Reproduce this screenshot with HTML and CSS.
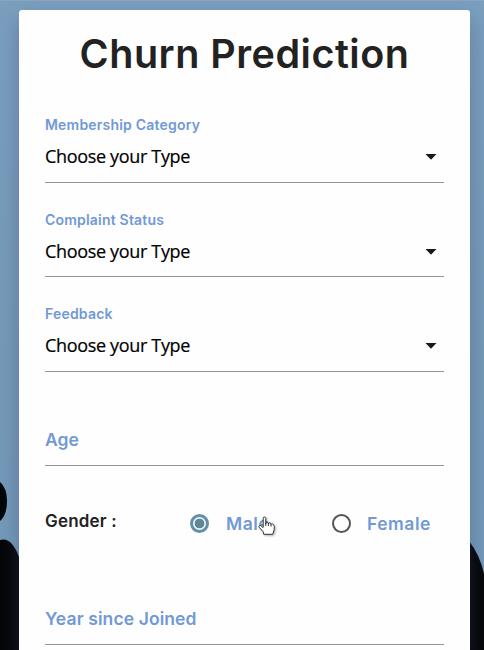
FILE: index.html
```html
<!DOCTYPE html>
<html lang="en">
<head>
<meta charset="utf-8">
<title>Churn Prediction</title>
<link rel="stylesheet" href="styles.css">
</head>
<body>
<svg class="scene" viewBox="0 0 484 650" aria-hidden="true">
  <path d="M0 482Q7 488 7 501Q7 515 0 521Z"/>
  <path d="M0 540Q7 538 12 544Q17 550 20 560V650H0Z"/>
  <path d="M469 541Q480 555 484 574V650H469Z"/>
</svg>
<form class="card">
  <h1 class="title">Churn Prediction</h1>
  <div class="field">
    <span class="label">Membership Category</span>
    <div class="select"><span class="value">Choose your Type</span><svg class="arrow" viewBox="0 0 12 6"><path d="M.5 0h11L6 5.8z"/></svg></div>
  </div>
  <div class="field">
    <span class="label">Complaint Status</span>
    <div class="select"><span class="value">Choose your Type</span><svg class="arrow" viewBox="0 0 12 6"><path d="M.5 0h11L6 5.8z"/></svg></div>
  </div>
  <div class="field">
    <span class="label">Feedback</span>
    <div class="select"><span class="value">Choose your Type</span><svg class="arrow" viewBox="0 0 12 6"><path d="M.5 0h11L6 5.8z"/></svg></div>
  </div>
  <div class="field input"><span class="placeholder">Age</span></div>
  <div class="gender">
    <span class="question">Gender :</span>
    <span class="option"><span class="radio checked"></span><span class="choice">Male<svg class="pointer" viewBox="0 0 18 20"><path d="M5.2 11V2.3Q5.2 1 6.5 1T7.8 2.3V8Q7.8 6 9.1 6T10.4 8Q10.5 6.7 11.7 6.7T13 8.6Q13.2 7.7 14.4 7.9T16.4 10.6Q16.7 13 14.8 18.3H5.8L5 15.5 1.5 11.7Q.3 10.2 1.5 9.6T4 10.5L5.2 12"/><path d="M7.8 8v2M10.4 8v2M13 8.6v2"/></svg></span></span>
    <span class="option"><span class="radio"></span><span class="choice">Female</span></span>
  </div>
  <div class="field input last"><span class="placeholder">Year since Joined</span></div>
</form>
</body>
</html>
```
FILE: styles.css
```css
* { box-sizing: border-box; }
html, body { margin: 0; height: 100%; overflow: hidden; }
body {
  display: flex;
  background: linear-gradient(#7a9fbe, #7499b7 60%, #7399b9);
  border-top: 1px solid #8aa4bd;
  font-family: Inter, "Liberation Sans", sans-serif;
  font-weight: 600;
  color: #222;
}
.scene { position: absolute; inset: 0; width: 484px; height: 650px; fill: #050608; }
.card {
  position: relative;
  width: 451px;
  margin: 9px 0 0 19px;
  padding: 19px 26px 0;
  background: #fefefe;
  border-radius: 3px 3px 0 0;
  box-shadow: 0 10px 20px rgba(60, 65, 110, .38);
}
.title {
  margin: 0;
  height: 59px;
  font-size: 39.5px;
  line-height: 51px;
  font-weight: 600;
  letter-spacing: .5px;
  text-align: center;
  white-space: nowrap;
}
.field { height: 94.5px; border-bottom: 1px solid #949494; white-space: nowrap; }
.label { display: block; padding-top: 29px; height: 50px; line-height: 16px; font-size: 14px; letter-spacing: .2px; color: #7199d6; }
.select { display: flex; justify-content: space-between; align-items: center; height: 38px; padding-right: 7.5px; }
.value { margin-top: -2px; font: 400 18px/24px "Open Sans", sans-serif; color: #000; letter-spacing: -.33px; -webkit-text-stroke: .2px #000; }
.arrow { width: 12px; height: 6px; fill: #191919; }
.input { display: flex; align-items: flex-end; padding-bottom: 13px; }
.placeholder { font-size: 17.5px; line-height: 24px; letter-spacing: .1px; color: #7199d6; }
.gender { display: grid; grid-template-columns: 145px 142px 1fr; align-items: center; height: 115px; white-space: nowrap; }
.question { font-size: 17px; line-height: 24px; letter-spacing: .2px; margin-top: -5px; }
.option { display: flex; align-items: center; gap: 17px; }
.option:last-child { gap: 16px; }
.radio { width: 19px; height: 19px; border: 2px solid #555; border-radius: 50%; flex: none; }
.radio.checked { border: 3px solid #6490a6; background: radial-gradient(circle, #5d8795 0 4.5px, #eefaff 5.2px); }
.choice { position: relative; font-size: 17.5px; line-height: 22px; letter-spacing: .5px; color: #7199d6; }
.pointer { position: absolute; left: 32px; top: 3px; width: 18px; height: 20px; fill: #fff; stroke: #333; stroke-width: 1; stroke-linejoin: round; filter: drop-shadow(1px 1px 1px rgba(0, 0, 0, .3)); }
.last { height: 64px; }
```
